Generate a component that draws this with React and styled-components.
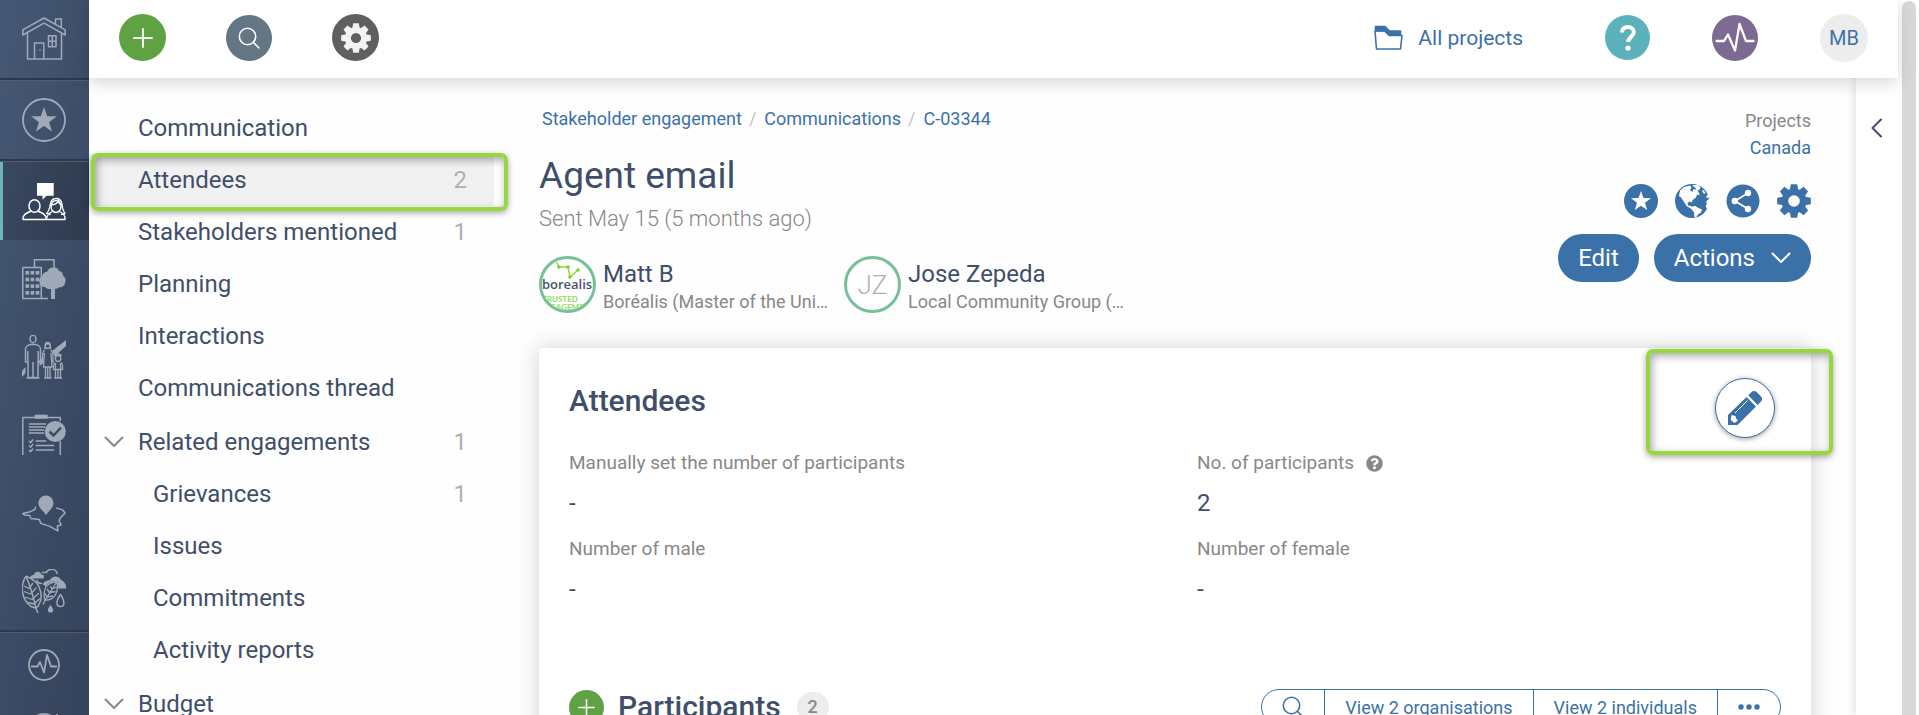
import React from "react";
import styled, { createGlobalStyle, css } from "styled-components";
import { FaQuestionCircle } from "react-icons/fa";

const c = {
  navy: "#3f4e69",
  blue: "#3b71a9",
  grey: "#888888",
  pale: "#b0b0b0",
  green: "#5fa243",
  mark: "#97d63f",
  rail: "#a0a9b8",
};

const GlobalStyle = createGlobalStyle`
  * { box-sizing: border-box; }
  body {
    margin: 0;
    overflow: hidden;
    background: #fefefe;
    color: ${c.navy};
    font-family: Roboto, "Liberation Sans", sans-serif;
    font-size: 24px;
  }
  h1, h2, p, ul, dl, dt, dd, ol { margin: 0; padding: 0; }
  ul, ol { list-style: none; }
  a { color: inherit; text-decoration: none; }
  button { font: inherit; color: inherit; border: 0; background: none; padding: 0; cursor: pointer; }
  svg { display: block; flex: none; }
`;

/* ---------- shell ---------- */
const Shell = styled.div`
  display: flex;
  height: 100vh;
  overflow: hidden;
`;
const Workspace = styled.div`
  flex: 1;
  min-width: 0;
  display: flex;
  flex-direction: column;
`;
const Body = styled.div`
  flex: 1;
  min-height: 0;
  display: flex;
`;
const ScrollTrack = styled.div`
  width: 21px;
  flex: none;
  padding: 1px 3px 0 4px;
  background: #fff;
`;
const ScrollThumb = styled.div`
  height: 100%;
  border-radius: 7px 7px 0 0;
  background: #d8d8d8;
`;

/* ---------- module rail ---------- */
const ModuleRail = styled.nav`
  width: 89px;
  flex: none;
  overflow: hidden;
  background: linear-gradient(100deg, #465875 0%, #3c4c66 55%, #35425b 100%);
`;
const ModuleLink = styled.a`
  display: flex;
  align-items: center;
  justify-content: center;
  height: ${(p) => (p.$small ? 64 : 78)}px;
  padding: 0 1px 1px 0;
  color: ${c.rail};
  ${(p) =>
    p.$active &&
    css`
      color: #fff;
      background: linear-gradient(100deg, #3a4962, #2e3a4e);
      box-shadow: inset 3px 0 #70b3bb;
    `}
`;
const RailDivider = styled.div`
  height: 3px;
  background: #2c384c;
  border-bottom: 1px solid #525d70;
`;

/* ---------- top bar ---------- */
const TopBar = styled.header`
  position: relative;
  z-index: 2;
  flex: none;
  height: 78px;
  display: flex;
  align-items: center;
  justify-content: space-between;
  padding: 0 30px 3px;
  background: #fff;
  box-shadow: 0 4px 16px rgba(0, 0, 0, 0.16);
`;
const Tools = styled.div`
  display: flex;
  align-items: center;
  gap: ${(p) => p.$gap}px;
`;
const RoundButton = styled.button`
  display: flex;
  align-items: center;
  justify-content: center;
  flex: none;
  width: ${(p) => p.$size}px;
  height: ${(p) => p.$size}px;
  border-radius: 50%;
  background: ${(p) => p.$bg};
  color: ${(p) => p.$fg || "#fff"};
  font-size: 20px;
`;
const ProjectsLink = styled.a`
  display: flex;
  align-items: center;
  gap: 15px;
  margin-right: 20px;
  color: ${c.blue};
  font-size: 21px;
`;

/* ---------- section menu ---------- */
const SectionMenu = styled.nav`
  width: 405px;
  flex: none;
  padding-top: 24px;
`;
const MenuGroup = styled.ul`
  margin-bottom: 2px;
`;
const MenuItem = styled.li`
  position: relative;
`;
const MenuLink = styled.a`
  display: flex;
  align-items: center;
  height: 52px;
  padding: 0 27px 0 ${(p) => (p.$child ? 64 : 49)}px;
  border-radius: 0 4px 4px 0;
  background: ${(p) => (p.$active ? "#f1f1f1" : "transparent")};
`;
const MenuLabel = styled.span`
  flex: 1;
`;
const Count = styled.span`
  color: ${c.pale};
`;
const ToggleMark = styled.span`
  width: 34px;
  margin-left: -34px;
  color: ${c.grey};
`;

/* ---------- callout frames drawn over the page ---------- */
const Callout = styled.div`
  position: absolute;
  z-index: 3;
  border: 4px solid ${c.mark};
  border-radius: 7px;
  box-shadow: 0 2px 6px rgba(0, 0, 0, 0.35), inset 2px 3px 9px rgba(0, 0, 0, 0.35);
  pointer-events: none;
`;
const MenuCallout = styled(Callout)`
  inset: -1px -14px -5px 2px;
`;
const EditCallout = styled(Callout)`
  top: 1px;
  right: -22px;
  width: 187px;
  height: 106px;
`;

/* ---------- record ---------- */
const Record = styled.main`
  flex: 1;
  min-width: 0;
  padding: 29px 45px 0;
`;
const RecordHead = styled.div`
  display: flex;
  justify-content: space-between;
  margin-bottom: 35px;
`;
const Breadcrumb = styled.ol`
  display: flex;
  padding-left: 3px;
  font-size: 18px;
  line-height: 24px;
  color: ${c.blue};
  li + li::before {
    content: "/";
    margin: 0 8px 0 7px;
    color: #c4c4c4;
  }
`;
const RecordTitle = styled.h1`
  margin-top: 23px;
  font-size: 37px;
  line-height: 44px;
  font-weight: 400;
`;
const SentLine = styled.p`
  margin-top: 6px;
  font-size: 22px;
  line-height: 30px;
  font-weight: 300;
  color: ${c.grey};
`;
const People = styled.ul`
  display: flex;
  gap: 14px;
  margin-top: 22px;
`;
const Person = styled.li`
  display: flex;
  align-items: flex-end;
  gap: 7px;
  width: 291px;
`;
const Avatar = styled.span`
  display: flex;
  align-items: center;
  justify-content: center;
  flex: none;
  width: 57px;
  height: 57px;
  overflow: hidden;
  border: 3px solid #76c09a;
  border-radius: 50%;
  background: #fff;
  color: ${c.pale};
  font-size: 26px;
  font-weight: 300;
`;
const PersonText = styled.div`
  min-width: 0;
`;
const PersonName = styled.a`
  display: block;
  line-height: 32px;
`;
const PersonOrg = styled.p`
  overflow: hidden;
  white-space: nowrap;
  text-overflow: ellipsis;
  font-size: 18px;
  line-height: 23px;
  color: ${c.grey};
`;
const RecordSide = styled.div`
  display: flex;
  flex-direction: column;
  align-items: flex-end;
`;
const SideText = styled.div`
  font-size: 18px;
  line-height: 27px;
  color: ${c.grey};
  text-align: right;
  a { display: block; color: ${c.blue}; }
`;
const IconRow = styled.div`
  display: flex;
  gap: 17px;
  margin-top: 23px;
  color: ${c.blue};
`;
const ButtonRow = styled.div`
  display: flex;
  gap: 15px;
  margin-top: 16px;
`;
const PillButton = styled.button`
  display: flex;
  align-items: center;
  gap: 16px;
  height: 48px;
  padding: 0 20px;
  border-radius: 24px;
  background: ${c.blue};
  color: #fff;
`;

/* ---------- card ---------- */
const Card = styled.section`
  position: relative;
  min-height: 100vh;
  padding: 30px;
  border-radius: 4px;
  background: #fff;
  box-shadow: 0 0 22px rgba(0, 0, 0, 0.18);
`;
const CardHead = styled.div`
  display: flex;
  justify-content: space-between;
  margin-bottom: 11px;
  padding-right: 6px;
`;
const CardTitle = styled.h2`
  font-size: 30px;
  line-height: 46px;
  font-weight: 500;
`;
const PencilButton = styled.button`
  display: flex;
  align-items: center;
  justify-content: center;
  width: 60px;
  height: 60px;
  border: 1px solid ${c.blue};
  border-radius: 50%;
  background: #fff;
  color: ${c.blue};
  box-shadow: 0 1px 5px rgba(0, 0, 0, 0.4);
`;
const Fields = styled.dl`
  display: grid;
  grid-template-columns: 1fr 1fr;
  gap: 18px 44px;
`;
const FieldLabel = styled.dt`
  display: flex;
  align-items: center;
  gap: 12px;
  font-size: 19px;
  line-height: 28px;
  color: ${c.grey};
`;
const FieldValue = styled.dd`
  margin-top: 12px;
  line-height: 28px;
`;
const ListHead = styled.div`
  display: flex;
  align-items: center;
  justify-content: space-between;
  margin-top: 86px;
`;
const ListTitle = styled.div`
  display: flex;
  align-items: center;
  gap: 14px;
  height: 36px;
`;
const Badge = styled.span`
  min-width: 32px;
  margin-left: 2px;
  border-radius: 15px;
  background: #ededed;
  color: ${c.grey};
  font-size: 18px;
  line-height: 30px;
  font-weight: 500;
  text-align: center;
`;
const Segments = styled.div`
  display: flex;
  height: 36px;
  border: 1px solid ${c.blue};
  border-radius: 18px;
`;
const Segment = styled.button`
  padding: 0 20px;
  color: ${c.blue};
  font-size: 18px;
  & + & { border-left: 1px solid ${c.blue}; }
`;
const SidePanel = styled.aside`
  width: 42px;
  flex: none;
  padding: 40px 0 0 15px;
  background: #fff;
  color: ${c.navy};
  box-shadow: -3px 0 8px rgba(0, 0, 0, 0.1);
`;
const PanelToggle = styled.button`
  display: block;
`;

/* ---------- drawings ---------- */
const RailSvg = ({ size = 44, children }) => (
  <svg width={size} height={size} viewBox="0 0 44 44" fill="none" stroke="currentColor" strokeWidth="1.5" strokeLinejoin="round" aria-hidden="true">
    {children}
  </svg>
);
const starPoints = (cx, cy, r) =>
  Array.from({ length: 10 }, (_, i) => {
    const a = -Math.PI / 2 + (i * Math.PI) / 5;
    const q = i % 2 ? r * 0.4 : r;
    return `${(cx + q * Math.cos(a)).toFixed(2)},${(cy + q * Math.sin(a)).toFixed(2)}`;
  }).join(" ");

const HomeIcon = () => (
  <RailSvg>
    <path d="M.8 12.8 22 1l21.200 11.800V18L22 6.200.8 18zM5.500 15.500V42h34V15.500M33.500 7.200V2h5.800v8.400M12.500 42V26h9.300v16M26.500 18.800H34v11h-7.500zM30.300 19v11M26.500 24.300H34" />
    <circle cx="18" cy="33" r=".8" fill="currentColor" stroke="none" />
  </RailSvg>
);
const StarModuleIcon = () => (
  <RailSvg>
    <circle cx="22" cy="22" r="21" strokeWidth="1.800" />
    <polygon points={starPoints(22, 22.5, 13.5)} fill="currentColor" stroke="none" />
  </RailSvg>
);
const PeopleIcon = () => (
  <RailSvg>
    <path d="M15 4h16.700v12.700H24.500l-4 4v-4H15z" fill="currentColor" stroke="none" />
    <ellipse cx="12.500" cy="27" rx="5.500" ry="6.300" />
    <path d="M.8 40.500h42.500M.8 40.500c0-5 3.500-6.500 8.500-8.500M15.700 32c5 2 8.500 3.500 8.700 8.500" />
    <ellipse cx="34" cy="27.500" rx="5" ry="6" />
    <path d="M28.500 24c2-6 9.500-6 11.200 0 .6 4 1.300 8 3.300 10.500l-4 1M28.500 24c-.6 4-1.300 8-3.800 10.500l4 1M29 26c4 0 6-1 7.500-4.500 0 2.500 1 3.800 3 4.300M30.500 32.500c-4 2-5.500 3.500-6 8M37.500 32.500c4 2 5.500 3.500 5.700 8" strokeWidth="1.300" />
  </RailSvg>
);
const BuildingsIcon = () => (
  <RailSvg>
    <path d="M.8 10.500h18.500V41.500H.8zM12.500 10.500V2.800H32V10M19 41.500h7" />
    {[14, 20.7, 27.3, 34].map((y) =>
      [3.5, 8.6, 13.7].map((x) => <rect key={`${x}-${y}`} x={x} y={y} width="3.600" height="3.600" fill="currentColor" stroke="none" />)
    )}
    <path d="M29 42V32c-3 .3-5-.6-6-2-3.500.2-6-2-5.300-4.500-1.500-2.500.2-5 2.300-5.300C20 17 22.500 14.500 25 15c.8-3 3.500-4.500 5.500-4.500 2.500-.8 6 .8 6.500 3.500 2.500.3 4.200 2 4 4.700 2.600 1.500 3.300 4.700 2 6.800.2 3-3 5.300-6 4.800-1 1-2.500 1.500-4 1.500V42z" fill="currentColor" stroke="none" />
  </RailSvg>
);
const FamilyIcon = () => (
  <RailSvg>
    <path d="M0 36 3.500 32v6L0 42zM17.500 25l3.500-2.500v6L17.500 31zM30 16 44 5v6L33 21z" fill="currentColor" stroke="none" />
    <ellipse cx="11" cy="4" rx="3" ry="3.700" />
    <path d="M8 9.500c-3.500 1-4.500 2-4.500 5V27h2.300V16M14 9.500c3.500 1 4.500 2 4.500 5V27h-2.300V16M6 26v16.500h10V26M11 27v15.500M8 9.500h6M4.500 43h13" />
    <path d="M22.800 14c-.8-7 6.500-7 5.700 0M25.700 7.500c4 0 3 6 0 6s-4-6 0-6M23 15c-2 1-2.500 3-2.500 6v6h1.800M28.500 15c2 1 2.500 3 2.500 6v6h-1.800M22.500 18l-1 14h8.500l-1-14M23.500 32v10.500M25.700 32v10.500M28 32v10.500M22 43h7.500" strokeWidth="1.300" />
    <path d="M32.500 21c1.500-3 5.500-3 7 0M36 20.500c4 0 3.500 6 0 6s-3.500-6 0-6M33 27.500c-2 1-1.500 4-1.500 7h2M39 27.500c2 1 1.500 4 1.500 7h-2M33.500 28v14.500M38.500 28v14.500M36 35v7.500M33.500 34.500h5M32 43h8" strokeWidth="1.300" />
  </RailSvg>
);
const ClipboardIcon = () => (
  <RailSvg>
    <path d="M.8 42V4.500h37.500V8M38.300 28v14" />
    <path d="M12.700 1.700h13v4h-13z" fill="currentColor" stroke="none" />
    <path d="M6.800 11H24M6.800 14h16.500M6.800 17h15.500M6.800 20h15.500M13.700 28h10.500M13.700 32.500H32M13.700 37H32M7 28l1.700 1.600L11 26.500M7 32.500l1.700 1.600L11 31M7 37l1.700 1.600L11 35.500" />
    <circle cx="33.300" cy="18.500" r="10.500" fill="currentColor" stroke="none" />
    <path d="m27.500 18.500 4 4 7.500-8" stroke="#3c4b65" strokeWidth="2.500" />
  </RailSvg>
);
const MapIcon = () => (
  <RailSvg>
    <path d="M24 24.300c-2.500-4.500-7.700-7.500-7.700-12.300a7.500 7.500 0 0 1 15.200 0c0 4.800-5 7.800-7.500 12.300z" fill="currentColor" stroke="none" />
    <path d="M13.800 15.500l-1 3-4.500 2.200-7.500 1.700 1.500 1.500 5.500.5 1 3.200 8.500 1 1.500 3.800 9 3 8 4.500-.5-5 3.800-1-2-4 1-2.700 5-5.300-2.500-3-6.500-2" />
  </RailSvg>
);
const LeafIcon = () => (
  <RailSvg>
    <path d="M4 7.300C-2 16-1 30 9 37.500l5 1.700C22 33 22 13 4 7.300zM4 7.300c4 9 7 19 10 31.900l2 5" />
    <path d="M2 17l5 2.500L11 14M2 22.500l6.500 2.500 6-6.500M3 28l7 2.500 7-6.500M6 33.500l6 1.500 6-5.500" strokeWidth="1.300" />
    <path d="M35 12.500c-11 1.500-14 7-12.500 18.500C32 32 37 24 35 12.500zM35 12.500c-4 7-9 13-14 23M25 20l2.500 3.500 6-1M28.500 17l1.500 3 5-2M23 24.500l2 3.500 6-1" strokeWidth="1.300" />
    <path d="M8 9.500c0-3 2.500-3.500 4-3.500.7-4 6.500-4.500 7.500-.5 2.500 0 3 2 2 4zM20.500 15c2-3 5-3.500 7.500-4 2-4.500 9-5 11 0 3.500 1 5.500 5 5 8.500h-8c.3-3 .2-5-.5-7.700-5 .2-10 2.200-12 5.700z" fill="currentColor" stroke="none" />
    <path d="M20 3.500h4C27-1 34-1 35.500 5M15 11c0 3 2 3.500 5 3.500" />
    <path d="M28.500 36c-4 5-3 7.500 0 7.500s4-2.500 0-7.500z" fill="currentColor" stroke="none" />
    <path d="M38.500 25.500c-5 7-4.500 12 0 12s4.500-5 0-12z" />
  </RailSvg>
);
const PulseModuleIcon = () => (
  <svg width="32" height="32" viewBox="0 0 32 32" fill="none" stroke="currentColor" strokeWidth="1.800" strokeLinejoin="round" aria-hidden="true">
    <circle cx="16" cy="16" r="15" />
    <path d="M3 17.500h6.500l2.500-4.500 4 10.500 3-17.500 4 11.500h6" />
  </svg>
);
const RefreshModuleIcon = () => (
  <svg width="32" height="32" viewBox="0 0 32 32" fill="none" stroke="currentColor" strokeWidth="1.800" aria-hidden="true">
    <path d="M28 7A15 15 0 1 0 31 16M29 1v6h-6M9 8a11 11 0 0 1 14 0" />
  </svg>
);
const PlusIcon = ({ size }) => (
  <svg width={size} height={size} viewBox="0 0 20 20" stroke="currentColor" strokeWidth="1.800" strokeLinecap="round" aria-hidden="true">
    <path d="M10 1v18M1 10h18" />
  </svg>
);
const SearchIcon = ({ size }) => (
  <svg width={size} height={size} viewBox="0 0 22 22" fill="none" stroke="currentColor" strokeWidth="1.600" strokeLinecap="round" aria-hidden="true">
    <circle cx="9.500" cy="9.500" r="8.200" />
    <path d="m15.500 15.500 5.500 5.500" />
  </svg>
);
const GearIcon = ({ size, hole }) => (
  <svg width={size} height={size} viewBox="0 0 34 34" fill="currentColor" aria-hidden="true">
    <circle cx="17" cy="17" r="12.500" />
    {Array.from({ length: 8 }, (_, i) => (
      <path key={i} d="M13.800.2h6.400l1 6h-8.400z" transform={`rotate(${i * 45} 17 17)`} />
    ))}
    <circle cx="17" cy="17" r="5.800" fill={hole} />
  </svg>
);
const ChevronDown = () => (
  <svg width="20" height="12" viewBox="0 0 20 12" fill="none" stroke="currentColor" strokeWidth="2" strokeLinecap="round" strokeLinejoin="round" aria-hidden="true">
    <path d="m1.500 1.500 8.500 8.500 8.500-8.500" />
  </svg>
);
const ChevronLeft = () => (
  <svg width="12" height="20" viewBox="0 0 12 20" fill="none" stroke="currentColor" strokeWidth="2" strokeLinecap="round" strokeLinejoin="round" aria-hidden="true">
    <path d="M10 1.500 1.500 10l8.500 8.500" />
  </svg>
);
const FolderIcon = () => (
  <svg width="29" height="25" viewBox="0 0 29 25" fill="none" stroke="currentColor" strokeWidth="1.600" strokeLinejoin="round" aria-hidden="true">
    <path d="M1.500 6V1.500h9.500l4.500 4.500h11v4H16l-5-4.500z" fill="currentColor" />
    <path d="M1 6h9.500l4.800 4.500H28L26.500 24h-24z" />
  </svg>
);
const QuestionIcon = () => (
  <svg width="20" height="28" viewBox="0 0 20 28" fill="none" stroke="currentColor" strokeWidth="4" aria-hidden="true">
    <path d="M4 8.500C4 4.500 6.500 3 10 3s5.800 2 5.800 5.300c0 4.200-5.600 4.700-5.600 9.700" />
    <circle cx="10" cy="24" r="2.600" fill="currentColor" stroke="none" />
  </svg>
);
const PulseIcon = () => (
  <svg width="40" height="32" viewBox="0 0 40 32" fill="none" stroke="currentColor" strokeWidth="2.300" strokeLinecap="round" strokeLinejoin="round" aria-hidden="true">
    <path d="M1.500 19H9l4-6.500 7 16 4.500-26.500L31 19h7.500" />
  </svg>
);
const StarDisc = () => (
  <svg width="34" height="34" viewBox="0 0 34 34" fill="currentColor" aria-hidden="true">
    <circle cx="17" cy="17" r="17" />
    <polygon points={starPoints(17, 17.5, 10.5)} fill="#fff" />
  </svg>
);
const GlobeDisc = () => (
  <svg width="34" height="34" viewBox="0 0 34 34" fill="#fff" aria-hidden="true">
    <circle cx="17" cy="17" r="17" fill="currentColor" />
    <path d="M5 6.500 9 3l6-1.500 1.500 2L15 6l2.500 2 1-3 3.500 1 3 4.500-3 .5-1.500 3-3 2-.5 2.500-2.500-1-2 1.500.5 2.500 3 .5 1.500 2.500-1 .5-5-3-2.500-4L6 13.500 4 12z" />
    <path d="M17 1.200 23 1l2.500 2-1 2.500-2.500 1.500-1.500-3z" />
    <path d="m16.500 22.500 4-.5 3 2 3.500 1.500-1 3-3 2-2 3h-1.500l-.5-5-2.500-3.500z" />
    <path d="M27 6.500l1.500-.5 2 3-1.500 1zM34.500 13l-2.500 1-1-1.500 2-2zM34.500 15v8l-2.500 2-1.500-3 1.500-2.500-1-1.500 1.500-2z" />
  </svg>
);
const ShareDisc = () => (
  <svg width="34" height="34" viewBox="0 0 34 34" fill="#fff" aria-hidden="true">
    <circle cx="17" cy="17" r="16.500" fill={c.blue} />
    <path d="M22 9 9 17l13 8" fill="none" stroke="#fff" strokeWidth="1.800" />
    <circle cx="22" cy="9" r="3.200" />
    <circle cx="8.800" cy="17" r="3.200" />
    <circle cx="22" cy="25" r="3.200" />
  </svg>
);
const PencilIcon = () => (
  <svg width="36" height="36" viewBox="0 0 36 36" aria-hidden="true">
    <path d="M1 25 19.500 7l9.500 9.500L10.500 35H1z" fill="currentColor" />
    <path d="M21.300 5.200 24.500 2c1.500-1.500 3.600-1.500 5.200 0L34 6.500c1.500 1.500 1.500 3.500 0 5l-3.500 3.400z" fill="currentColor" />
    <path d="M8 23 20.500 10.500" stroke="#fff" strokeWidth="1" />
    <path d="m4.500 25 4 1 .8 3 1.700 1-2.500 2.500H6.500l-2.800-2.800z" fill="#fff" />
  </svg>
);
const BorealisLogo = () => (
  <svg width="51" height="51" viewBox="0 0 51 51" aria-label="borealis">
    <path d="M14 2l3 6h9l2 10 8-7" fill="none" stroke="#8fdc3c" strokeWidth="1.500" />
    <g fill="#7ed321">
      <circle cx="17" cy="8" r="1.800" />
      <circle cx="26" cy="8" r="1.800" />
      <circle cx="28" cy="18" r="1.800" />
      <circle cx="36" cy="11" r="1.800" />
    </g>
    <text x="25" y="30" textAnchor="middle" fontFamily="Open Sans" fontSize="13" fontWeight="600" fill="#47546c">borealis</text>
    <text x="18" y="43" textAnchor="middle" fontFamily="Lato" fontSize="8" fontWeight="700" fill="#8fdc5c">TRUSTED</text>
    <text x="25" y="51" textAnchor="middle" fontFamily="Lato" fontSize="8" fontWeight="700" fill="#8fdc5c">ENGAGEMENT</text>
  </svg>
);
const DotsIcon = () => (
  <svg width="22" height="6" viewBox="0 0 22 6" fill="currentColor" aria-hidden="true">
    <circle cx="3" cy="3" r="2.700" />
    <circle cx="11" cy="3" r="2.700" />
    <circle cx="19" cy="3" r="2.700" />
  </svg>
);

/* ---------- data ---------- */
const menu = [
  [
    { label: "Communication" },
    { label: "Attendees", count: 2, active: true },
    { label: "Stakeholders mentioned", count: 1 },
    { label: "Planning" },
    { label: "Interactions" },
    { label: "Communications thread" },
  ],
  [
    { label: "Related engagements", count: 1, open: true },
    { label: "Grievances", count: 1, child: true },
    { label: "Issues", child: true },
    { label: "Commitments", child: true },
    { label: "Activity reports", child: true },
  ],
  [{ label: "Budget", open: true }],
];
const modules = [
  ["Stakeholder engagement", PeopleIcon],
  ["Organisations", BuildingsIcon],
  ["Communities", FamilyIcon],
  ["Commitments", ClipboardIcon],
  ["Land", MapIcon],
  ["Environment", LeafIcon],
];
const fields = [
  { label: "Manually set the number of participants", value: "-" },
  { label: "No. of participants", value: "2", help: true },
  { label: "Number of male", value: "-" },
  { label: "Number of female", value: "-" },
];

export default function App() {
  return (
    <Shell>
      <GlobalStyle />
      <ModuleRail aria-label="Modules">
        <ModuleLink href="#" aria-label="Home"><HomeIcon /></ModuleLink>
        <RailDivider />
        <ModuleLink href="#" aria-label="Favourites"><StarModuleIcon /></ModuleLink>
        <RailDivider />
        {modules.map(([name, Icon], i) => (
          <ModuleLink key={name} href="#" aria-label={name} $active={i === 0}><Icon /></ModuleLink>
        ))}
        <RailDivider />
        <ModuleLink href="#" aria-label="Activity" $small><PulseModuleIcon /></ModuleLink>
        <ModuleLink href="#" aria-label="Refresh" $small><RefreshModuleIcon /></ModuleLink>
      </ModuleRail>

      <Workspace>
        <TopBar>
          <Tools $gap={60}>
            <RoundButton $size={47} $bg={c.green} aria-label="Add"><PlusIcon size={20} /></RoundButton>
            <RoundButton $size={46} $bg="#627684" aria-label="Search"><SearchIcon size={22} /></RoundButton>
            <RoundButton $size={47} $bg="#5f5f5f" $fg="#f2f2f2" aria-label="Settings"><GearIcon size={30} hole="#5f5f5f" /></RoundButton>
          </Tools>
          <Tools $gap={62}>
            <ProjectsLink href="#"><FolderIcon />All projects</ProjectsLink>
            <RoundButton $size={45} $bg="#5bb2bb" aria-label="Help"><QuestionIcon /></RoundButton>
            <RoundButton $size={46} $bg="#7d6a93" aria-label="Activity"><PulseIcon /></RoundButton>
            <RoundButton $size={48} $bg="#ededed" $fg={c.blue}>MB</RoundButton>
          </Tools>
        </TopBar>

        <Body>
          <SectionMenu aria-label="Sections">
            {menu.map((group) => (
              <MenuGroup key={group[0].label}>
                {group.map((item) => (
                  <MenuItem key={item.label}>
                    <MenuLink href="#" $child={item.child} $active={item.active}>
                      {item.open && <ToggleMark><ChevronDown /></ToggleMark>}
                      <MenuLabel>{item.label}</MenuLabel>
                      {item.count && <Count>{item.count}</Count>}
                    </MenuLink>
                    {item.active && <MenuCallout />}
                  </MenuItem>
                ))}
              </MenuGroup>
            ))}
          </SectionMenu>

          <Record>
            <RecordHead>
              <div>
                <Breadcrumb>
                  <li><a href="#">Stakeholder engagement</a></li>
                  <li><a href="#">Communications</a></li>
                  <li><a href="#">C-03344</a></li>
                </Breadcrumb>
                <RecordTitle>Agent email</RecordTitle>
                <SentLine>Sent May 15 (5 months ago)</SentLine>
                <People>
                  <Person>
                    <Avatar><BorealisLogo /></Avatar>
                    <PersonText>
                      <PersonName href="#">Matt B</PersonName>
                      <PersonOrg>Boréalis (Master of the Universe)</PersonOrg>
                    </PersonText>
                  </Person>
                  <Person>
                    <Avatar>JZ</Avatar>
                    <PersonText>
                      <PersonName href="#">Jose Zepeda</PersonName>
                      <PersonOrg>Local Community Group (Member)</PersonOrg>
                    </PersonText>
                  </Person>
                </People>
              </div>
              <RecordSide>
                <SideText>Projects<a href="#">Canada</a></SideText>
                <IconRow>
                  <button aria-label="Favourite"><StarDisc /></button>
                  <button aria-label="Map"><GlobeDisc /></button>
                  <button aria-label="Share"><ShareDisc /></button>
                  <button aria-label="Settings"><GearIcon size={34} hole="#fff" /></button>
                </IconRow>
                <ButtonRow>
                  <PillButton>Edit</PillButton>
                  <PillButton>Actions<ChevronDown /></PillButton>
                </ButtonRow>
              </RecordSide>
            </RecordHead>

            <Card>
              <CardHead>
                <CardTitle>Attendees</CardTitle>
                <PencilButton aria-label="Edit attendees"><PencilIcon /></PencilButton>
              </CardHead>
              <Fields>
                {fields.map((f) => (
                  <div key={f.label}>
                    <FieldLabel>{f.label}{f.help && <FaQuestionCircle size={17} />}</FieldLabel>
                    <FieldValue>{f.value}</FieldValue>
                  </div>
                ))}
              </Fields>
              <ListHead>
                <ListTitle>
                  <RoundButton $size={35} $bg={c.green} aria-label="Add participant"><PlusIcon size={17} /></RoundButton>
                  <CardTitle>Participants</CardTitle>
                  <Badge>2</Badge>
                </ListTitle>
                <Segments>
                  <Segment aria-label="Search"><SearchIcon size={22} /></Segment>
                  <Segment>View 2 organisations</Segment>
                  <Segment>View 2 individuals</Segment>
                  <Segment aria-label="More"><DotsIcon /></Segment>
                </Segments>
              </ListHead>
              <EditCallout />
            </Card>
          </Record>

          <SidePanel>
            <PanelToggle aria-label="Expand panel"><ChevronLeft /></PanelToggle>
          </SidePanel>
        </Body>
      </Workspace>

      <ScrollTrack><ScrollThumb /></ScrollTrack>
    </Shell>
  );
}
